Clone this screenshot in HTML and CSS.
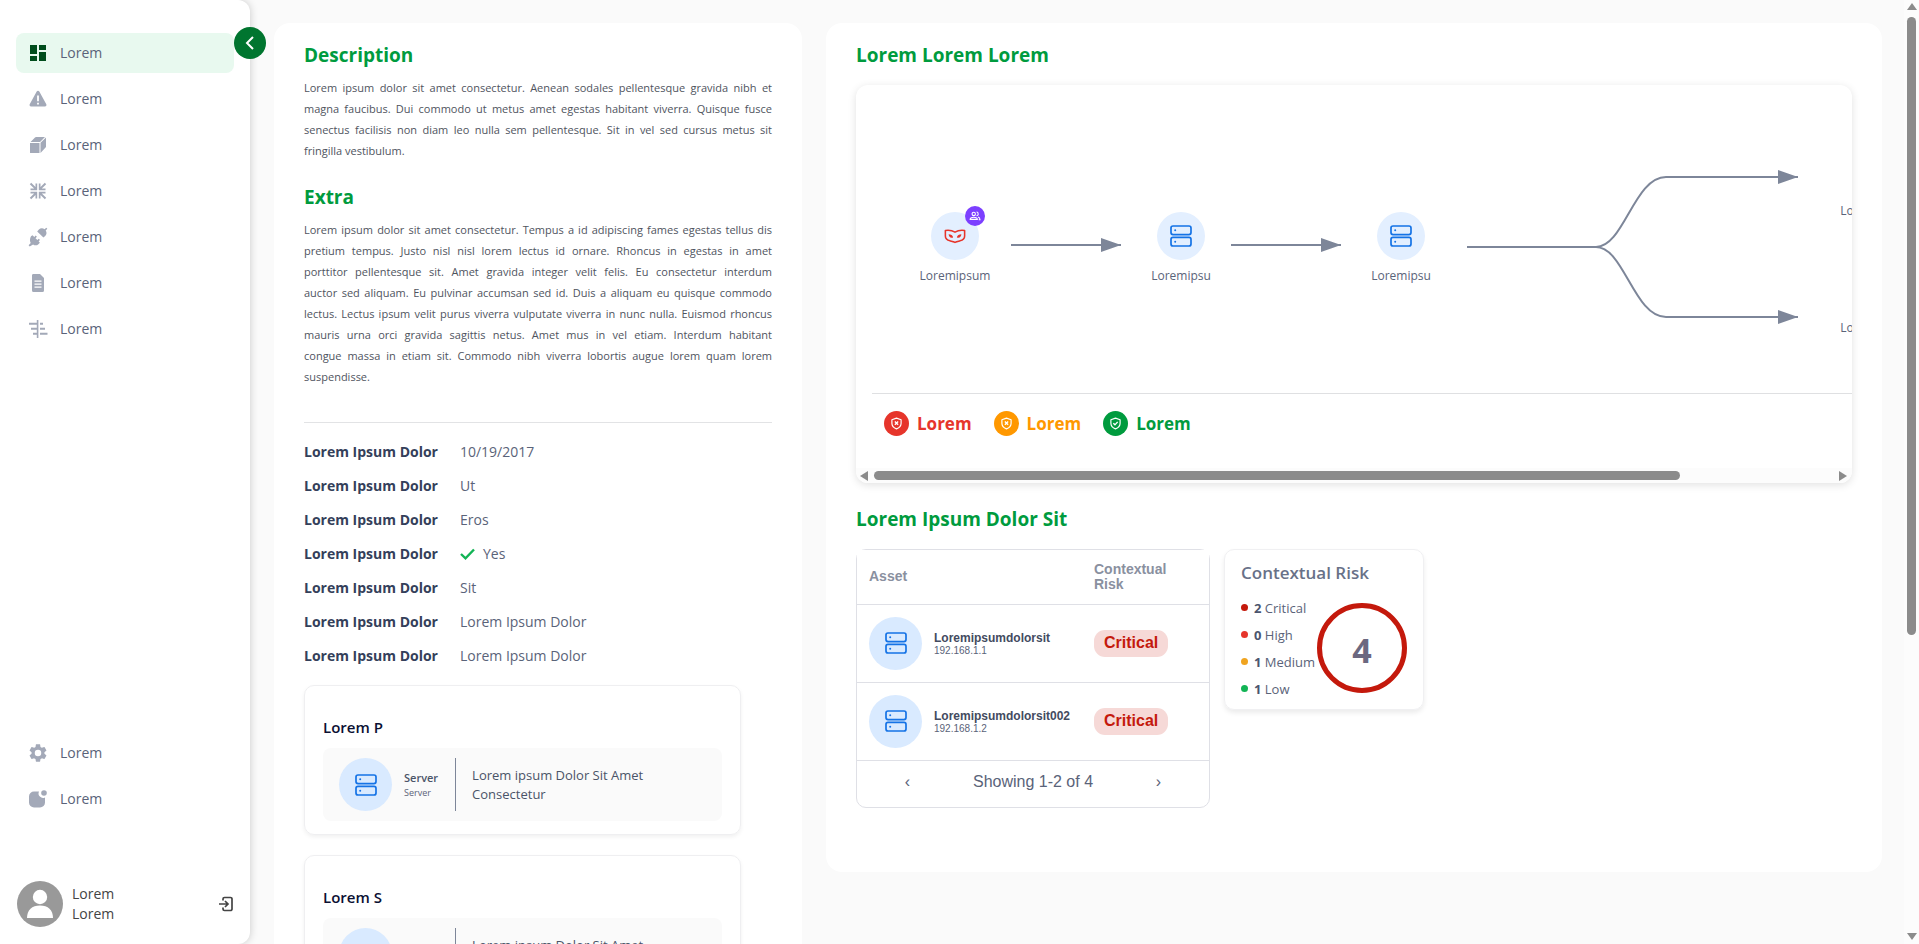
FILE: index.html
```html
<!DOCTYPE html>
<html lang="en">
<head>
<meta charset="utf-8">
<meta name="viewport" content="width=device-width, initial-scale=1">
<title>Lorem</title>
<link rel="stylesheet" href="styles.css">
</head>
<body>
<svg class="defs" aria-hidden="true">
  <symbol id="server" viewBox="0 0 24 24">
    <g fill="none" stroke="currentColor" stroke-width="1.7">
      <rect x="2" y="2" width="20" height="8.6" rx="2"/>
      <rect x="2" y="13.4" width="20" height="8.6" rx="2"/>
    </g>
    <circle cx="6.2" cy="6.3" r="1" fill="currentColor"/>
    <circle cx="6.2" cy="17.7" r="1" fill="currentColor"/>
  </symbol>
  <symbol id="shield-x" viewBox="0 0 24 24">
    <path fill="none" stroke="currentColor" stroke-width="2.2" stroke-linejoin="round" d="M12 2l8.500 3.200v6.300c0 5-3.500 8.500-8.500 10.500-5-2-8.500-5.500-8.500-10.500V5.200z"/>
    <path fill="none" stroke="currentColor" stroke-width="2.600" d="M9 8.500l6 6M15 8.500l-6 6"/>
  </symbol>
  <symbol id="shield-ok" viewBox="0 0 24 24">
    <path fill="none" stroke="currentColor" stroke-width="2.2" stroke-linejoin="round" d="M12 2l8.500 3.200v6.300c0 5-3.500 8.500-8.500 10.500-5-2-8.500-5.500-8.500-10.500V5.200z"/>
    <path fill="none" stroke="currentColor" stroke-width="2.600" d="M8 11.500l3 3 5-5.500"/>
  </symbol>
</svg>
<div class="app">
  <aside class="sidebar">
    <nav class="nav">
      <a class="nav-item active" href="#"><svg viewBox="0 0 18 18"><path d="M1 1h7v9H1zM10 1h7v5h-7zM1 12h7v5H1zM10 8h7v9h-7z"/></svg>Lorem</a>
      <a class="nav-item" href="#"><svg viewBox="0 0 18 18"><path fill-rule="evenodd" d="M7.700 1.500a1.500 1.500 0 0 1 2.600 0l7 12.800a1.500 1.500 0 0 1-1.300 2.200H2a1.500 1.500 0 0 1-1.300-2.200zM8.100 5.500v5.800h1.800V5.500zM8.100 12.700v1.900h1.800v-1.900z"/></svg>Lorem</a>
      <a class="nav-item" href="#"><svg viewBox="0 0 18 18"><path d="M1 7h9.500v10H1.500a.5.5 0 0 1-.5-.5zM1.500 6L6 1.500Q6.500 1 7 1h9l-5 5zM11.500 6.700L17 1.500V11l-5.500 6z"/></svg>Lorem</a>
      <a class="nav-item" href="#"><svg viewBox="0 0 18 18"><path d="M8.200 8.200H1.500V6.500h3.700L.8 2.200 2.200.8l4.300 4.300V1.500h1.700zM9.800 8.200V1.500h1.700v3.600L15.800.8l1.400 1.400-4.400 4.300h3.700v1.700zM8.200 9.800v6.700H6.500v-3.600l-4.300 4.300-1.400-1.400 4.400-4.300H1.500V9.800zM9.800 9.800h6.700v1.700h-3.700l4.400 4.300-1.400 1.400-4.300-4.300v3.600H9.800z"/></svg>Lorem</a>
      <a class="nav-item" href="#"><svg viewBox="0 0 18 18"><path d="M17.300-.3l1 1-1.600 1.700c1.300 1.900 1 4-.5 5.500l-1.800 1.700-6.200-6.200L9.900 1.600c1.500-1.500 3.800-1.700 5.600-.4zM2 8.300l1.500-1 1.800 1.700L6.700 7.600l1.200 1.200-1.400 1.400 1.900 1.900 1.400-1.400 1.200 1.200-1.400 1.400 1.300 1.400-1.500 1.500c-1.600 1.500-3.700 1.500-5.300.3L.7 18.400l-1.100-1.200L1.700 15C.7 13.300.7 10.800 2 8.300z"/></svg>Lorem</a>
      <a class="nav-item" href="#"><svg viewBox="0 0 18 18"><path fill-rule="evenodd" d="M4 0h7l4 4v12.500A1.500 1.500 0 0 1 13.500 18h-9A1.500 1.500 0 0 1 3 16.500V1.200A1.200 1.200 0 0 1 4 0zM5.500 6.500v1.300h7V6.500zM5.500 9.500v1.300h7V9.500zM5.500 12.500v1.300h7v-1.300z"/></svg>Lorem</a>
      <a class="nav-item" href="#"><svg viewBox="0 0 18 18"><path d="M7.800 0h1.600v18H7.800v-3.200H4v-2h3.800V9.700H2v-2h5.800V4.800H0v-2h7.800zM11 2.800h3v2h-3zM11 7.800h5v2h-5zM11 12.700h7.500v2H11z"/></svg>Lorem</a>
    </nav>
    <nav class="nav">
      <a class="nav-item" href="#"><svg viewBox="2 2 20 20"><path d="M19.140 12.940c.04-.3.060-.61.060-.94 0-.32-.02-.64-.07-.94l2.030-1.580c.18-.14.230-.41.120-.61l-1.920-3.320c-.12-.22-.37-.29-.59-.22l-2.390.96c-.5-.38-1.030-.7-1.620-.94L14.400 2.810c-.04-.24-.24-.41-.48-.41h-3.840c-.24 0-.43.17-.47.41l-.36 2.540c-.59.24-1.130.57-1.620.94l-2.390-.96c-.22-.08-.47 0-.59.22L2.740 8.870c-.12.210-.08.470.12.610l2.030 1.580c-.05.3-.09.630-.09.940s.02.640.07.940l-2.030 1.580c-.18.140-.23.410-.12.610l1.920 3.320c.12.220.37.290.59.220l2.390-.96c.5.380 1.030.7 1.620.940l.36 2.540c.05.240.24.410.48.410h3.840c.24 0 .44-.17.470-.41l.36-2.540c.59-.24 1.130-.56 1.620-.94l2.390.96c.22.080.47 0 .59-.22l1.920-3.320c.12-.22.070-.47-.12-.61zM12 15.600A3.600 3.600 0 1 1 12 8.400a3.600 3.600 0 0 1 0 7.200z"/></svg>Lorem</a>
      <a class="nav-item" href="#"><svg viewBox="0 0 18 18"><path d="M5 1.500h5a4.500 4.500 0 0 0 6 6v5a5 5 0 0 1-5 5H5a5 5 0 0 1-5-5V6.500a5 5 0 0 1 5-5z"/><circle cx="15" cy="3" r="2.800"/></svg>Lorem</a>
    </nav>
    <div class="user">
      <svg class="avatar" viewBox="0 0 46 46"><circle cx="23" cy="23" r="23" fill="#999"/><circle cx="23" cy="16" r="7.200" fill="#fff"/><path d="M10 37c0-8 5-12.500 13-12.500S36 29 36 37z" fill="#fff"/></svg>
      <div class="user-name"><div>Lorem</div><div>Lorem</div></div>
      <button class="logout" aria-label="Log out"><svg viewBox="0 0 16 16" fill="none" stroke="#444" stroke-width="1.700"><path d="M5 4.500V3a1.500 1.500 0 0 1 1.500-1.500h6A1.500 1.500 0 0 1 14 3v10a1.500 1.500 0 0 1-1.500 1.500h-6A1.500 1.500 0 0 1 5 13v-1.500M1 8h8.500M7 5l3 3-3 3"/></svg></button>
    </div>
    <button class="collapse" aria-label="Collapse"><svg viewBox="0 0 14 14" fill="none" stroke="#fff" stroke-width="2"><path d="M10 1L4 7l6 6"/></svg></button>
  </aside>

  <main class="main">
    <section class="panel">
      <h2>Description</h2>
      <p class="copy">Lorem ipsum dolor sit amet consectetur. Aenean sodales pellentesque gravida nibh et magna faucibus. Dui commodo ut metus amet egestas habitant viverra. Quisque fusce senectus facilisis non diam leo nulla sem pellentesque. Sit in vel sed cursus metus sit fringilla vestibulum.</p>
      <h2>Extra</h2>
      <p class="copy">
        <span class="line">Lorem ipsum dolor sit amet consectetur. Tempus a id adipiscing fames egestas tellus dis</span>
        <span class="line">pretium tempus. Justo nisl nisl lorem lectus id ornare. Rhoncus in egestas in amet</span>
        <span class="line">porttitor pellentesque sit. Amet gravida integer velit felis. Eu consectetur interdum</span>
        <span class="line">auctor sed aliquam. Eu pulvinar accumsan sed id. Duis a aliquam eu quisque commodo</span>
        <span class="line">lectus. Lectus ipsum velit purus viverra vulputate viverra in nunc nulla. Euismod rhoncus</span>
        <span class="line">mauris urna orci gravida sagittis netus. Amet mus in vel etiam. Interdum habitant</span>
        <span class="line">congue massa in etiam sit. Commodo nibh viverra lobortis augue lorem quam lorem</span>
        suspendisse.
      </p>
      <dl class="facts">
        <dt>Lorem Ipsum Dolor</dt><dd>10/19/2017</dd>
        <dt>Lorem Ipsum Dolor</dt><dd>Ut</dd>
        <dt>Lorem Ipsum Dolor</dt><dd>Eros</dd>
        <dt>Lorem Ipsum Dolor</dt><dd><svg class="check" viewBox="0 0 15 12" fill="none" stroke="#12b455" stroke-width="2.400"><path d="M1 6l4.500 4.300L14 1.500"/></svg>Yes</dd>
        <dt>Lorem Ipsum Dolor</dt><dd>Sit</dd>
        <dt>Lorem Ipsum Dolor</dt><dd>Lorem Ipsum Dolor</dd>
        <dt>Lorem Ipsum Dolor</dt><dd>Lorem Ipsum Dolor</dd>
      </dl>
      <article class="asset-card">
        <h3>Lorem P</h3>
        <div class="asset-box">
          <span class="disc"><svg><use href="#server"/></svg></span>
          <div class="asset-kind"><strong>Server</strong><small>Server</small></div>
          <p>Lorem ipsum Dolor Sit Amet Consectetur</p>
        </div>
      </article>
      <article class="asset-card">
        <h3>Lorem S</h3>
        <div class="asset-box">
          <span class="disc"><svg><use href="#server"/></svg></span>
          <div class="asset-kind"><strong>Server</strong><small>Server</small></div>
          <p>Lorem ipsum Dolor Sit Amet Consectetur</p>
        </div>
      </article>
    </section>

    <section class="panel">
      <h2>Lorem Lorem Lorem</h2>
      <div class="flow">
        <div class="flow-view">
          <div class="canvas">
            <svg class="edges" viewBox="0 0 1192 308" fill="none" stroke="#7d8699" stroke-width="2">
              <path d="M155 160h110M375 160h110"/>
              <path d="M611 162h129c28 0 38-70 70-70h132M740 162c28 0 38 70 70 70h132"/>
              <path fill="#7d8699" stroke="none" d="M245 153l20 7-20 7zM465 153l20 7-20 7zM922 85l20 7-20 7zM922 225l20 7-20 7z"/>
            </svg>
            <div class="node n1"><span class="disc"><svg class="mask" viewBox="0 0 24 16" fill="none" stroke="#e6352b" stroke-width="1.700" stroke-linejoin="round"><path d="M1.500 1.500c4-.6 7.500 0 10.500 1.800 3-1.800 6.500-2.400 10.500-1.800v6c0 3-1.500 4.400-5 5.200-2.500.6-4.300 1-5.500 1.800-1.200-.8-3-1.200-5.500-1.800-3.500-.8-5-2.200-5-5.200z"/><path fill="#e6352b" stroke="none" d="M5 5.500c2.500 0 4.500 1 5 3.500-3 1-4.500-.500-5-3.500zM19 5.500c-2.500 0-4.500 1-5 3.500 3 1 4.500-.500 5-3.500z"/></svg></span>
              <span class="group"><svg viewBox="0 0 14 12" fill="none" stroke="#fff" stroke-width="1.300"><circle cx="5.500" cy="3.500" r="2"/><path d="M1.200 10c0-3.300 8.600-3.300 8.600 0zM8.800 1.200c2.700 0 2.700 4.500 0 4.500M10.500 7.200c1.700.4 2.500 1.300 2.500 3.300h-1.500"/></svg></span>
              <span>Loremipsum</span></div>
            <div class="node n2"><span class="disc"><svg><use href="#server"/></svg></span><span>Loremipsu</span></div>
            <div class="node n3"><span class="disc"><svg><use href="#server"/></svg></span><span>Loremipsu</span></div>
            <div class="node n4">Loremipsu</div>
            <div class="node n5">Loremipsu</div>
          </div>
          <ul class="legend">
            <li class="red"><span><svg><use href="#shield-x"/></svg></span>Lorem</li>
            <li class="amber"><span><svg><use href="#shield-x"/></svg></span>Lorem</li>
            <li class="green"><span><svg><use href="#shield-ok"/></svg></span>Lorem</li>
          </ul>
        </div>
        <div class="hbar" aria-hidden="true"><i class="tri left"></i><div class="track"><div class="thumb"></div></div><i class="tri right"></i></div>
      </div>
      <h2>Lorem Ipsum Dolor Sit</h2>
      <div class="risk">
        <div class="assets">
          <table>
            <thead><tr><th>Asset</th><th>Contextual Risk</th></tr></thead>
            <tbody>
              <tr><td><div class="asset"><span class="disc"><svg><use href="#server"/></svg></span><div><strong>Loremipsumdolorsit</strong><small>192.168.1.1</small></div></div></td><td><span class="badge">Critical</span></td></tr>
              <tr><td><div class="asset"><span class="disc"><svg><use href="#server"/></svg></span><div><strong>Loremipsumdolorsit002</strong><small>192.168.1.2</small></div></div></td><td><span class="badge">Critical</span></td></tr>
            </tbody>
          </table>
          <div class="pager"><button aria-label="Previous">‹</button><span>Showing 1-2 of 4</span><button aria-label="Next">›</button></div>
        </div>
        <div class="summary">
          <h3>Contextual Risk</h3>
          <div class="summary-body">
            <ul>
              <li class="critical"><b>2</b> Critical</li>
              <li class="high"><b>0</b> High</li>
              <li class="medium"><b>1</b> Medium</li>
              <li class="low"><b>1</b> Low</li>
            </ul>
            <div class="ring">4</div>
          </div>
        </div>
      </div>
    </section>
  </main>
  <div class="vbar" aria-hidden="true"><i class="tri up"></i><div class="track"><div class="thumb"></div></div><i class="tri down"></i></div>
</div>
</body>
</html>
```

FILE: styles.css
```css
* { box-sizing: border-box; }

body {
  margin: 0;
  background: #fafafa;
  color: #5a6379;
  font: 14px/20px "Open Sans", "Noto Sans", sans-serif;
}

h2, h3, p, ul, dl, dd { margin: 0; padding: 0; }
ul { list-style: none; }
button { padding: 0; border: 0; background: none; color: inherit; font: inherit; cursor: pointer; }
.defs { display: none; }

.app {
  display: grid;
  grid-template-columns: 250px minmax(0, 1fr) 15px;
  height: 100vh;
  overflow: hidden;
}

/* Sidebar */
.sidebar {
  position: relative;
  z-index: 1;
  display: flex;
  flex-direction: column;
  padding: 33px 16px 17px;
  background: #fff;
  border-radius: 0 12px 12px 0;
  box-shadow: 0 0 8px rgba(0, 0, 0, .2);
}
.nav { display: grid; gap: 6px; }
.nav:first-child { margin-bottom: auto; }
.nav-item {
  display: flex;
  align-items: center;
  gap: 13px;
  height: 40px;
  padding: 0 13px;
  border-radius: 8px;
  color: #5a6379;
  line-height: 22px;
  text-decoration: none;
}
.nav-item svg { width: 18px; height: 18px; fill: #a3a9b8; overflow: visible; }
.nav-item.active { background: #e8f9ef; }
.nav-item.active svg { fill: #004d1c; }
.user { display: flex; align-items: center; gap: 9px; margin-top: 62px; padding-left: 1px; color: #444; }
.avatar { width: 46px; height: 46px; }
.user-name { flex: 1; }
.logout svg { display: block; width: 16px; height: 16px; }
.collapse {
  position: absolute;
  top: 27px;
  right: -16px;
  display: grid;
  place-items: center;
  width: 32px;
  height: 32px;
  border-radius: 50%;
  background: #00752f;
}
.collapse svg { width: 14px; height: 14px; }

/* Content */
.main {
  display: grid;
  grid-template-columns: minmax(0, 1fr) minmax(0, 2fr);
  align-items: start;
  gap: 24px;
  padding: 23px 22px 23px 24px;
  overflow-y: auto;
  scrollbar-width: none;
}
.panel { padding: 20px 30px 64px; background: #fff; border-radius: 16px; }
h2 { color: #009b3e; font-size: 19px; line-height: 24px; font-weight: 700; }
.copy {
  margin: 10px 0 24px;
  color: #4f545e;
  font-size: 11px;
  line-height: 21px;
  text-align: justify;
}
.line { display: block; text-align-last: justify; }
.facts {
  display: grid;
  grid-template-columns: max-content 1fr;
  column-gap: 22px;
  margin-top: 35px;
  padding-top: 12px;
  border-top: 1px solid #e2e3e5;
  line-height: 34px;
}
.facts dt { color: #34405a; font-weight: 700; }
.facts dd { display: flex; align-items: center; }
.check { width: 15px; height: 12px; margin-right: 8px; }

.disc {
  display: grid;
  flex: none;
  place-items: center;
  width: 53px;
  height: 53px;
  border-radius: 50%;
  background: #d9eaff;
  color: #1573e6;
}
.disc svg { width: 24px; height: 24px; }

.asset-card {
  margin-top: 12px;
  margin-right: 31px;
  padding: 28px 18px 13px;
  border: 1px solid #efeff1;
  border-radius: 10px;
  box-shadow: 0 2px 4px rgba(0, 0, 0, .06);
}
.asset-card + .asset-card { margin-top: 20px; }
.asset-card h3 { color: #0b1033; font-size: 15px; line-height: 26px; font-weight: 600; }
.asset-box {
  display: flex;
  align-items: center;
  margin-top: 8px;
  padding: 10px 16px;
  border-radius: 8px;
  background: #fafafa;
}
.asset-kind { display: grid; align-content: center; margin-left: 12px; padding-right: 17px; }
.asset-kind strong { color: #4a5468; font-size: 11px; line-height: 16px; font-weight: 600; }
.asset-kind small { font-size: 9px; line-height: 14px; }
.asset-box p {
  display: flex;
  align-items: center;
  align-self: stretch;
  width: 210px;
  padding-left: 16px;
  border-left: 1px solid #7d8699;
  color: #4a5468;
  font-size: 13px;
  line-height: 19px;
}

/* Flow */
.flow {
  margin: 18px 0 24px;
  border-radius: 12px;
  background: #fff;
  box-shadow: 0 2px 8px rgba(0, 0, 0, .12);
  overflow: hidden;
}
.flow-view { overflow-x: auto; scrollbar-width: none; }
.canvas { position: relative; width: 1192px; height: 308px; }
.edges { display: block; width: 1192px; height: 308px; }
.node {
  position: absolute;
  display: flex;
  flex-direction: column;
  align-items: center;
  gap: 6px;
  width: 80px;
  font-size: 12px;
}
.node .disc { width: 48px; height: 48px; background: #e3efff; }
.node .mask { width: 22px; height: 15px; }
.n1 { left: 59px; top: 127px; }
.n2 { left: 285px; top: 127px; }
.n3 { left: 505px; top: 127px; }
.n4 { left: 974px; top: 116px; }
.n5 { left: 974px; top: 233px; }
.group {
  position: absolute;
  top: -6px;
  right: 10px;
  display: grid;
  place-items: center;
  width: 20px;
  height: 20px;
  border-radius: 50%;
  background: #7c3fff;
}
.group svg { width: 12px; height: 10px; }
.legend {
  display: flex;
  gap: 22px;
  width: 1160px;
  margin-left: 16px;
  padding: 17px 12px 32px;
  border-top: 1px solid #dfe0e2;
  font-size: 17px;
  line-height: 24px;
  font-weight: 700;
}
.legend li { display: flex; align-items: center; gap: 8px; }
.legend span { display: grid; place-items: center; width: 25px; height: 25px; border-radius: 50%; }
.legend svg { width: 13px; height: 13px; color: #fff; }
.red { color: #e6352b; }
.red span { background: #e6352b; }
.amber { color: #ff9800; }
.amber span { background: #ff9800; }
.green { color: #009b3e; }
.green span { background: #009b3e; }

/* Scroll indicators */
.hbar, .vbar { display: flex; align-items: center; background: #fcfcfc; }
.hbar { gap: 6px; height: 15px; padding: 0 5px 0 4px; }
.vbar { flex-direction: column; gap: 7px; padding: 3px 0 4px; }
.track { flex: 1; }
.thumb { border-radius: 5px; background: #8b8b8b; }
.hbar .thumb { width: 84%; height: 9px; }
.vbar .thumb { width: 9px; height: 68%; }
.tri { border: 0 solid transparent; }
.left { border-width: 5px 8px 5px 0; border-right-color: #8b8b8b; }
.right { border-width: 5px 0 5px 8px; border-left-color: #8b8b8b; }
.up { border-width: 0 5px 7px; border-bottom-color: #8b8b8b; }
.down { border-width: 7px 5px 0; border-top-color: #8b8b8b; }

/* Risk */
.risk { display: flex; align-items: flex-start; gap: 14px; margin-top: 18px; font-family: "Liberation Sans", Arial, sans-serif; }
.assets { width: 354px; border: 1px solid #dfe0e6; border-radius: 10px; }
table { width: 100%; border-collapse: collapse; table-layout: fixed; }
th { height: 54px; padding: 0 12px; background: #fff; color: #8a909f; font-size: 14px; line-height: 15px; text-align: left; }
th:last-child { width: 127px; padding-right: 40px; }
td { height: 78px; padding: 0 12px; border-top: 1px solid #dfe0e6; }
.asset { display: flex; align-items: center; gap: 12px; }
.asset strong, .asset small { display: block; }
.asset strong { color: #434b60; font-size: 12px; line-height: 14px; }
.asset small { font-size: 10px; line-height: 11px; }
.badge {
  display: inline-block;
  padding: 3px 10px 4px;
  border-radius: 11px;
  background: #f6d9d7;
  color: #c4190c;
  font-size: 16px;
  font-weight: 700;
  vertical-align: middle;
}
.pager {
  display: grid;
  grid-template-columns: 1fr 150px 1fr;
  place-items: center;
  height: 47px;
  padding-bottom: 4px;
  border-top: 1px solid #dfe0e6;
  font-size: 16px;
}
.summary {
  width: 200px;
  padding: 11px 16px 6px;
  border: 1px solid #f0f0f2;
  border-radius: 10px;
  box-shadow: 0 3px 5px rgba(0, 0, 0, .08);
  font-family: "Open Sans", "Noto Sans", sans-serif;
}
.summary h3 { color: #687188; font-size: 17px; line-height: 24px; font-weight: 600; white-space: nowrap; }
.summary-body { display: flex; margin-top: 10px; font-size: 13px; line-height: 27px; }
.summary ul { flex: 1; min-width: 0; white-space: nowrap; }
.summary li::before {
  content: "";
  display: inline-block;
  width: 7px;
  height: 7px;
  margin-right: 6px;
  border-radius: 50%;
  background: currentColor;
  vertical-align: 2px;
}
.summary b { color: #4b556e; }
.summary .critical::before { color: #c4190c; }
.summary .high::before { color: #e6352b; }
.summary .medium::before { color: #f0a420; }
.summary .low::before { color: #12b455; }
.ring {
  display: grid;
  place-items: center;
  width: 90px;
  height: 90px;
  margin-top: 8px;
  padding-top: 4px;
  border: 5px solid #c4190c;
  border-radius: 50%;
  color: #6b6880;
  font-size: 34px;
  font-weight: 700;
}
```
